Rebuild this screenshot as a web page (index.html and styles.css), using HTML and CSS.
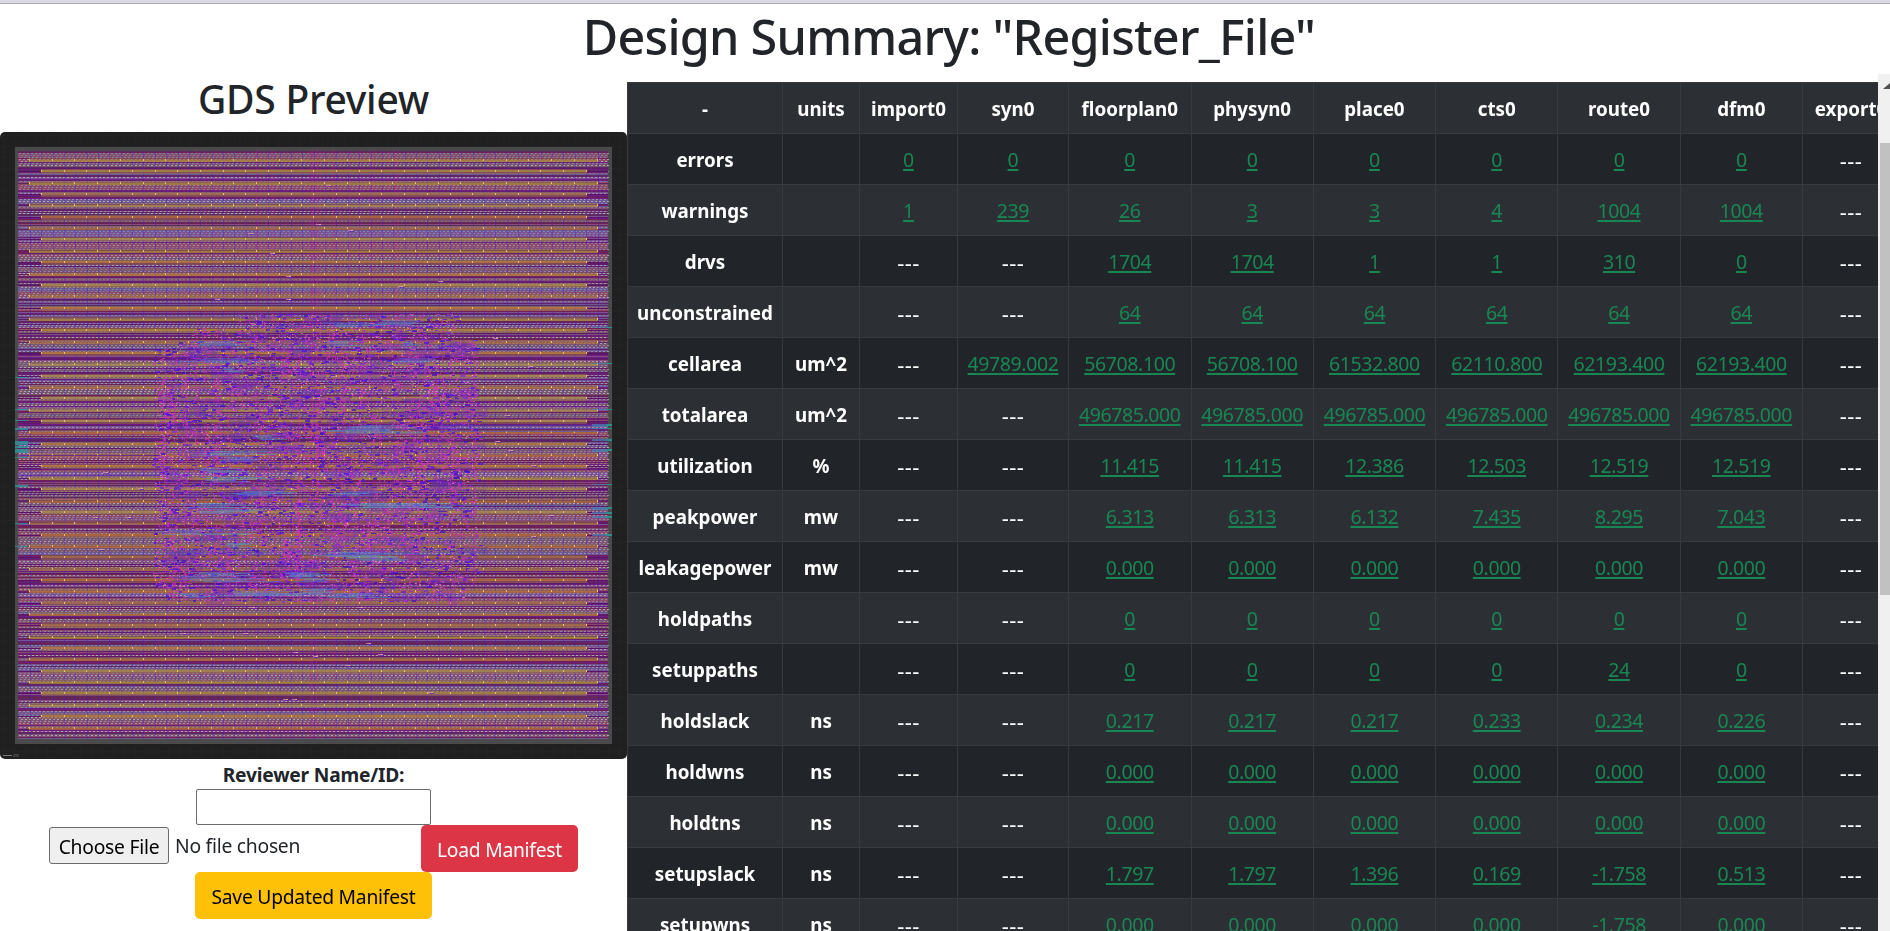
FILE: index.html
```html
<!DOCTYPE html>
<html lang="en">
<head>
<meta charset="utf-8">
<title>Design Summary</title>
<link rel="stylesheet" href="styles.css">
</head>
<body>
<div class="topbar"></div>
<h1 class="title">Design Summary: "Register_File"</h1>
<main class="layout">
  <section class="side">
    <h2 class="subtitle">GDS Preview</h2>
    <canvas class="gds" id="gds" width="627" height="627"></canvas>
    <div class="form">
      <label class="label" for="reviewer">Reviewer Name/ID:</label>
      <input class="reviewer" id="reviewer" type="text">
      <div class="files">
        <div class="picker"><span class="choose">Choose File</span><span class="none">No file chosen</span></div>
        <button class="btn load">Load Manifest</button>
      </div>
      <button class="btn save">Save Updated Manifest</button>
    </div>
  </section>
  <section class="metrics">
    <table class="table">
      <colgroup><col class="c0"><col class="c1"><col class="c2"><col class="c3"><col class="c4"><col class="c5"><col class="c5"><col class="c5"><col class="c5"><col class="c5"><col class="c6"></colgroup>
      <tbody id="rows"></tbody>
    </table>
  </section>
  <div class="scroll"><i class="arrow"></i><i class="thumb"></i></div>
</main>
<script src="main.js"></script>
</body>
</html>
```
FILE: styles.css
```css
* { box-sizing: border-box; }
body {
  margin: 0;
  height: 931px;
  overflow: hidden;
  background: #fff;
  color: #212529;
  font: 18.8px/30px "Noto Sans", "Open Sans", sans-serif;
}
.topbar { height: 4px; background: #d9d9e2; border-bottom: 1px solid #a9a9ae; }
.title {
  margin: 0;
  height: 70px;
  padding: 2px 0 0 8px;
  text-align: center;
  font-size: 48.5px;
  line-height: 60px;
  font-weight: 500;
  letter-spacing: -.75px;
}
.layout { display: flex; height: 857px; }
.side { width: 627px; flex: none; display: flex; flex-direction: column; align-items: center; }
.subtitle { margin: 0; height: 58px; font-size: 39px; line-height: 50px; font-weight: 500; letter-spacing: -.25px; }
.gds { display: block; width: 627px; height: 627px; border-radius: 5px; }
.form { display: flex; flex-direction: column; align-items: center; width: 100%; }
.label { font-weight: 700; height: 30px; line-height: 32px; font-size: 19.2px; letter-spacing: -.2px; }
.reviewer { width: 235px; height: 36px; border: 1px solid #6b6b6b; border-radius: 2px; background: #fff; }
.files { display: flex; width: 529px; justify-content: space-between; align-items: flex-start; }
.picker { display: flex; align-items: center; padding-top: 2px; gap: 6px; font-size: 19.3px; letter-spacing: -.25px; }
.choose {
  width: 120px;
  height: 37px;
  border: 1px solid #6b6b6b;
  border-radius: 3px;
  background: #efefef;
  color: #000;
  text-align: center;
  line-height: 37px;
  white-space: nowrap;
}
.btn {
  height: 47px;
  border: 0;
  border-radius: 5px;
  padding: 3px 0 0;
  font: inherit;
  font-size: 19.3px;
  letter-spacing: -.25px;
  white-space: nowrap;
}
.load { width: 157px; background: #dc3545; color: #fff; }
.save { width: 237px; background: #ffc107; color: #000; }
.metrics { width: 1251px; flex: none; overflow: hidden; padding-top: 8px; }
.table { width: 1271.5px; table-layout: fixed; border-collapse: collapse; }
.c0 { width: 155px; } .c1 { width: 77px; } .c2 { width: 98px; } .c3 { width: 111px; } .c4 { width: 122.5px; } .c5 { width: 122.3px; } .c6 { width: 97px; }
.table tr { height: 51px; background: #212529; color: #fff; }
.table tr:nth-child(odd) { background: #2c3034; }
.table td, .table th { padding: 2px 0 0; border: 1px solid #373b3e; text-align: center; white-space: nowrap; }
.table td { font-size: 19.5px; letter-spacing: -.4px; }
.table td.dash { font-size: 22px; letter-spacing: .4px; }
.table a { color: #198754; text-decoration: underline; text-decoration-thickness: 2px; text-underline-offset: 2px; }
.scroll { flex: 1; background: #f0f0f0; overflow: hidden; }
.arrow { display: block; width: 0; height: 0; margin: 9px 0 0 5px; border: 7px solid transparent; border-top: 0; border-bottom: 6px solid #505050; }
.thumb { display: block; width: 17px; height: 452px; margin: 54px 0 0 2px; background: #c1c1c1; }
```
FILE: main.js
```javascript
const header = ['-', 'units', 'import0', 'syn0', 'floorplan0', 'physyn0', 'place0', 'cts0', 'route0', 'dfm0', 'export0'];
const data = [
  'errors||0|0|0|0|0|0|0|0',
  'warnings||1|239|26|3|3|4|1004|1004',
  'drvs||---|---|1704|1704|1|1|310|0',
  'unconstrained||---|---|64|64|64|64|64|64',
  'cellarea|um^2|---|49789.002|56708.100|56708.100|61532.800|62110.800|62193.400|62193.400',
  'totalarea|um^2|---|---|496785.000|496785.000|496785.000|496785.000|496785.000|496785.000',
  'utilization|%|---|---|11.415|11.415|12.386|12.503|12.519|12.519',
  'peakpower|mw|---|---|6.313|6.313|6.132|7.435|8.295|7.043',
  'leakagepower|mw|---|---|0.000|0.000|0.000|0.000|0.000|0.000',
  'holdpaths||---|---|0|0|0|0|0|0',
  'setuppaths||---|---|0|0|0|0|24|0',
  'holdslack|ns|---|---|0.217|0.217|0.217|0.233|0.234|0.226',
  'holdwns|ns|---|---|0.000|0.000|0.000|0.000|0.000|0.000',
  'holdtns|ns|---|---|0.000|0.000|0.000|0.000|0.000|0.000',
  'setupslack|ns|---|---|1.797|1.797|1.396|0.169|-1.758|0.513',
  'setupwns|ns|---|---|0.000|0.000|0.000|0.000|-1.758|0.000'
];
const rows = document.getElementById('rows');
rows.innerHTML = '<tr>' + header.map(h => `<th>${h}</th>`).join('') + '</tr>' +
  data.map(line => '<tr>' + (line + '|---').split('|').map((v, i) =>
    i < 2 ? `<th>${v}</th>` : v === '---' ? '<td class="dash">---</td>' : `<td><a>${v}</a></td>`).join('') + '</tr>').join('');

// Chip layout preview
const g = document.getElementById('gds').getContext('2d');
let seed = 7;
const rnd = () => (seed = (seed * 16807) % 2147483647) / 2147483647;
const box = (c, x, y, w, h) => { g.fillStyle = c; g.fillRect(x, y, w, h); };
const pick = a => a[Math.floor(rnd() * a.length)];

box('#202020', 0, 0, 627, 627);
for (let i = 3; i < 627; i += 11) { box('#232323', i, 0, 1, 627); box('#232323', 0, i, 627, 1); }
box('#4a4a4d', 15, 15, 597, 597);
box('#75427f', 18, 19, 590, 588);

// horizontal routing tracks
const dark = ['#5f1a68', '#66206c', '#6b1d80', '#702050', '#5a2a5c'];
const mid = ['#84507c', '#7d5570', '#7a5590', '#8c4c66', '#76586e', '#6c5a92'];
let tone = mid[0];
for (let y = 19; y < 607; y++) {
  if (y % 5 === 0) tone = pick(mid);
  const on = rnd() < .38;
  box(on ? pick(dark) : tone, 18, y, 590, 1);
  if (!on && y % 2) {
    const c = pick(['#a58fae', '#8583b0', '#98707e', '#94829c', '#b0a4b4']);
    for (let x = 19 + (y % 3); x < 608; x += 4) box(c, x, y, 2, 1);
  }
}
// vertical tracks
for (let x = 30; x < 606; x += 11.35) box('rgba(75,25,200,.4)', Math.round(x), 19, 1, 588);
for (let i = 0; i < 80; i++) box('rgba(170,30,160,.15)', 20 + Math.floor(rnd() * 586), 19, 1, 588);
for (let i = 0; i < 34; i++) box('rgba(225,20,150,.16)', 180 + Math.floor(rnd() * 240), 17, 1, 100 + rnd() * 490);

// power straps with vias
for (let k = 0; k < 52; k++) {
  const y = Math.round(28 + k * 11.35);
  if (y > 604) break;
  const s = k % 2 ? 41 : 29, e = k % 2 ? 587 : 598;
  const c = pick(['#b0623a', '#b5743c', '#a36a4a', '#a5853c', '#a88a50']);
  g.globalAlpha = .55;
  box('#96704a', s, y - 2, e - s, k % 2 ? 5 : 3);
  g.globalAlpha = .8;
  box(c, s, y - (k % 2), e - s, 2);
  g.globalAlpha = 1;
  if (k % 2) { box('#5a1268', 18, y, 23, 1); box('#5a1268', 587, y, 21, 1); }
  for (let x = s; x < e + 3; x += 22.7) box('#f0c35c', Math.round(x), y - 1, 1, 2);
}

// standard cell cluster, drawn as small rings and fills clumped by area
const left = y => y < 196 ? 242 : y < 208 ? 196 : y < 216 ? 180 : y > 455 ? 170 : 157;
const right = y => y < 208 ? 454 : y > 440 ? 464 : 477;
const inside = (x, y) => x > left(y) - rnd() * 6 && x < right(y) + rnd() * 6 && y > 180 && y < 471;
for (let i = 0; i < 420; i++) {
  const x = 157 + rnd() * 320, y = 182 + rnd() * 286;
  if (inside(x, y) && x < right(y) - 14) { g.globalAlpha = .28; box(pick(['#6a20d0', '#8a28b8', '#5a30b0']), x, y, 8 + rnd() * 24, 3 + rnd() * 6); }
}
for (let i = 0; i < 95; i++) {
  let x = 160 + 11.35 * Math.floor(rnd() * 28), y = 190 + rnd() * 260;
  const n = 6 + rnd() * 14;
  for (let j = 0; j < n; j++) {
    g.globalAlpha = .6;
    const px = Math.round(x + rnd() * 8 - 4), py = Math.round(y + j * 2);
    if (inside(px, py)) box('#c832b8', px, py, 1 + Math.floor(rnd() * 3), 2);
  }
}
for (let i = 0; i < 8200; i++) {
  const x = Math.floor(152 + rnd() * 328), y = Math.floor(182 + rnd() * 288);
  if (!inside(x, y)) continue;
  g.globalAlpha = .7;
  const r = rnd();
  if (r < .3) box(pick(['#4a10e0', '#3a10c0', '#6418d8', '#7a28d8']), x, y, 2 + Math.floor(rnd() * 4), 1 + Math.floor(rnd() * 2));
  else if (r < .6) box(pick(['#d040b8', '#b82cc0', '#c83a98']), x, y, 1 + Math.floor(rnd() * 4), 1);
  else if (r < .85) box(pick(['#c030b8', '#a828c8', '#d83aa8']), x, y, 1, 2 + Math.floor(rnd() * 3));
  else box(pick(['#e088b8', '#e08a90', '#d880d8', '#e0905c']), x, y, 1 + Math.floor(rnd() * 2), 1);
}
g.globalAlpha = .5;
for (let i = 0; i < 6; i++) for (let y = 220; y < 455; y += 2) if (rnd() < .6) {
  box('#d634b4', [162, 184, 296, 416, 450, 473][i] + Math.floor(rnd() * 4), y, 1, 3);
}
g.globalAlpha = 1;

// long wires
[[322,192,65],[370,190,60],[185,211,75],[325,211,45],[400,211,20],[175,228,100],[390,228,50],[223,238,22],[345,295,70],[315,299,115],[250,305,35],[190,321,95],[215,327,65],[190,338,70],[190,347,80],[225,361,80],[330,361,65],[180,373,80],[340,373,130],[195,379,75],[145,400,120],[225,413,30],[310,422,110],[335,426,90],[180,442,95],[280,442,55],[170,447,120],[290,447,60],[300,458,42],[175,463,40],[200,461,115],[320,463,80]]
  .forEach(([x, y, w]) => {
    for (let j = 0; j < 5; j++) box(`rgba(${60 + rnd() * 40},${100 + rnd() * 90},205,.42)`, x + rnd() * w * .3, y + j - 2, w * (.35 + rnd() * .45), 1);
  });
for (const y of [293, 296, 299, 373, 376]) box('rgba(60,80,190,.45)', 440, y, 165, 1);
for (const y of [306, 323, 343]) box('rgba(70,10,180,.6)', 20, y, 140, 1);

// edge pins
[[245,1],[277,1],[288,1],[296,2],[309,4],[314,2],[317,4],[325,1],[353,2],[391,1],[414,1]]
  .forEach(([y, h]) => box('rgba(45,150,155,.8)', 15, y, 13, h));
[[195,1],[231,1],[277,1],[292,3],[296,1],[307,2],[317,3],[352,1],[375,3],[380,2],[384,2],[402,2]]
  .forEach(([y, h]) => { box('rgba(70,130,180,.7)', 592, y, 16, h); box('#2c9088', 606, y, 6, Math.min(h, 2)); });

// stray cells
[[328,53],[318,92],[350,98],[250,101],[272,121],[288,144],[440,149],[400,154],[217,167],[288,167],[505,195],[495,206],[530,234],[507,283],[497,309],[510,318],[533,333],[105,340],[140,356],[95,385],[128,385],[550,383],[100,417],[533,404],[252,475],[360,475],[183,501],[245,501],[368,511],[380,522],[295,520],[315,524],[347,533],[430,560],[285,567],[294,567]]
  .forEach(([x, y]) => { g.globalAlpha = .75; box('#d58fc0', x - 2, y, 5, 1); box('#5a25b5', x, y + 1, 4, 1); box('#f0b28c', x + 1, y, 2, 1); });
g.globalAlpha = 1;

// scale bar
box('#7a7a7a', 3, 623, 9, 1);
box('#3c3c3c', 13, 622, 6, 3);
```
